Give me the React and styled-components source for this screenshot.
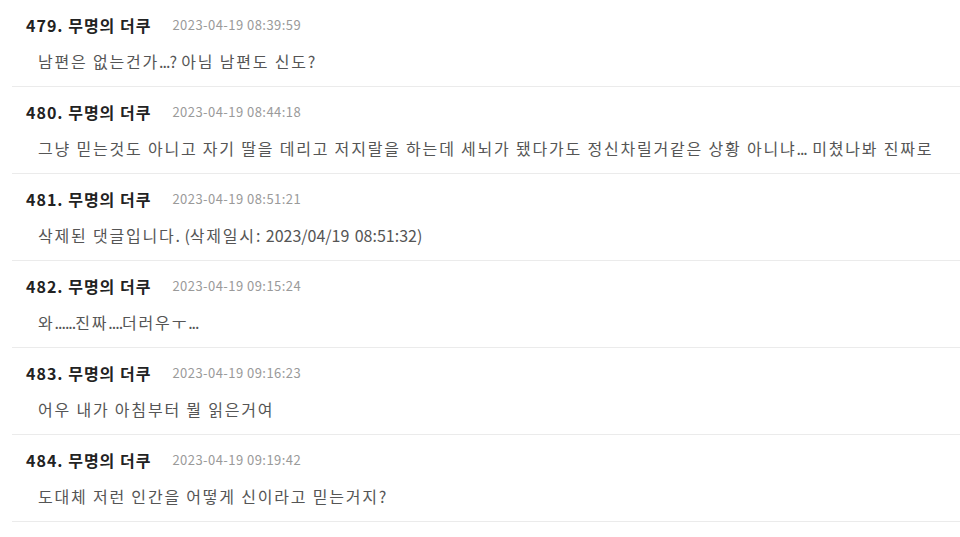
import React from 'react';
import styled, { createGlobalStyle } from 'styled-components';

const GlobalStyle = createGlobalStyle`
  body {
    margin: 0;
    background: #fff;
    font-family: "Noto Sans CJK KR", "Noto Sans", sans-serif;
  }
`;

const List = styled.div`
  display: flex;
  flex-direction: column;
  padding-left: 12px;
`;

const Comment = styled.div`
  display: flex;
  flex-direction: column;
  gap: 14px;
  padding: 14px 0 14px 14px;
  border-bottom: 1px solid #ebebeb;
`;

const Header = styled.div`
  display: flex;
  align-items: center;
  gap: 21px;
  height: 22px;
`;

const Author = styled.span`
  font-size: 16px;
  font-weight: 700;
  color: #222;
  line-height: 22px;
  letter-spacing: 1px;
`;

const Date = styled.span`
  font-size: 13px;
  color: #9a9a9a;
  line-height: 22px;
  letter-spacing: 0.45px;
`;

const Body = styled.div`
  padding-left: 12px;
  font-size: 16px;
  line-height: 22px;
  color: #555;
  letter-spacing: 1.8px;
  white-space: nowrap;
`;

// digits and punctuation sit tighter than the hangul in the original
const Latin = styled.span`
  letter-spacing: ${({ $dots }) => ($dots ? '-1px' : '0')};
`;

const splitRuns = (text) =>
  text.split(/([^\uAC00-\uD7A3\u3131-\u318E ]+)/).map((part, i) => {
    if (!part) return null;
    if (/[\uAC00-\uD7A3\u3131-\u318E ]/.test(part[0])) return part;
    return (
      <Latin key={i} $dots={/^[.?]+$/.test(part)}>
        {part}
      </Latin>
    );
  });

const comments = [
  { no: 479, date: '2023-04-19 08:39:59', text: '남편은 없는건가...? 아님 남편도 신도?' },
  { no: 480, date: '2023-04-19 08:44:18', text: '그냥 믿는것도 아니고 자기 딸을 데리고 저지랄을 하는데 세뇌가 됐다가도 정신차릴거같은 상황 아니냐... 미쳤나봐 진짜로' },
  { no: 481, date: '2023-04-19 08:51:21', text: '삭제된 댓글입니다. (삭제일시: 2023/04/19 08:51:32)' },
  { no: 482, date: '2023-04-19 09:15:24', text: '와......진짜....더러우ㅜ...' },
  { no: 483, date: '2023-04-19 09:16:23', text: '어우 내가 아침부터 뭘 읽은거여' },
  { no: 484, date: '2023-04-19 09:19:42', text: '도대체 저런 인간을 어떻게 신이라고 믿는거지?' },
];

const App = () => {
  return (
    <>
      <GlobalStyle />
      <List>
        {comments.map((c) => (
          <Comment key={c.no}>
            <Header>
              <Author>{c.no}. 무명의 더쿠</Author>
              <Date>{c.date}</Date>
            </Header>
            <Body>{splitRuns(c.text)}</Body>
          </Comment>
        ))}
      </List>
    </>
  );
};

export default App;
